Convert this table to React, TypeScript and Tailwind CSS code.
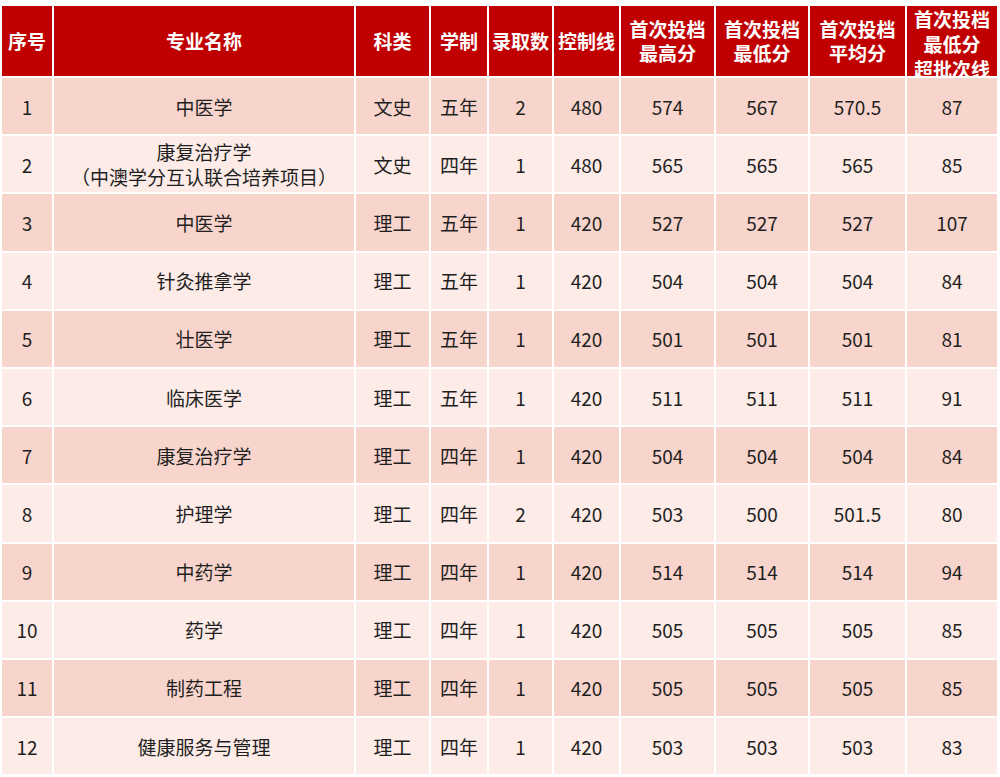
import React from "react";

const headers: string[][] = [
  ["序号"],
  ["专业名称"],
  ["科类"],
  ["学制"],
  ["录取数"],
  ["控制线"],
  ["首次投档", "最高分"],
  ["首次投档", "最低分"],
  ["首次投档", "平均分"],
  ["首次投档", "最低分", "超批次线"],
];

const PAREN = "__paren__";

const rows: (string | string[])[][] = [
  ["1", "中医学", "文史", "五年", "2", "480", "574", "567", "570.5", "87"],
  ["2", ["康复治疗学", PAREN], "文史", "四年", "1", "480", "565", "565", "565", "85"],
  ["3", "中医学", "理工", "五年", "1", "420", "527", "527", "527", "107"],
  ["4", "针灸推拿学", "理工", "五年", "1", "420", "504", "504", "504", "84"],
  ["5", "壮医学", "理工", "五年", "1", "420", "501", "501", "501", "81"],
  ["6", "临床医学", "理工", "五年", "1", "420", "511", "511", "511", "91"],
  ["7", "康复治疗学", "理工", "四年", "1", "420", "504", "504", "504", "84"],
  ["8", "护理学", "理工", "四年", "2", "420", "503", "500", "501.5", "80"],
  ["9", "中药学", "理工", "四年", "1", "420", "514", "514", "514", "94"],
  ["10", "药学", "理工", "四年", "1", "420", "505", "505", "505", "85"],
  ["11", "制药工程", "理工", "四年", "1", "420", "505", "505", "505", "85"],
  ["12", "健康服务与管理", "理工", "四年", "1", "420", "503", "503", "503", "83"],
];

function Line({ text }: { text: string }) {
  if (text === PAREN) {
    return (
      <div className="flex items-center">
        <span className="inline-block w-[19px] text-center">（</span>
        <span>中澳学分互认联合培养项目</span>
        <span className="inline-block w-[19px] text-center">）</span>
      </div>
    );
  }
  return <div>{text}</div>;
}

export default function App() {
  return (
    <div
      className="w-[1000px] h-[777px] bg-white overflow-hidden pl-[2px] pt-[6px]"
      style={{ fontFamily: '"Noto Sans CJK SC", "Noto Sans", sans-serif' }}
    >
      <div className="grid grid-cols-[50px_300px_73px_56px_63px_65px_93px_92px_95px_90px] grid-rows-[70px] auto-rows-[56.2px] gap-[2px]">
        {headers.map((h, i) => (
          <div
            key={"h" + i}
            className={
              "bg-[#c00000] text-white font-bold text-[19px] flex flex-col items-center justify-center overflow-hidden " +
              (h.length === 3 ? "leading-[25px] pt-[4px]" : "leading-[24px]")
            }
          >
            {h.map((line, j) => (
              <div key={j} className="whitespace-nowrap">
                {line}
              </div>
            ))}
          </div>
        ))}
        {rows.map((r, ri) =>
          r.map((c, ci) => (
            <div
              key={ri + "-" + ci}
              className={
                (ri % 2 === 0 ? "bg-[#f8d5cc]" : "bg-[#fcebe7]") +
                " text-[#1f1f1f] text-[19px] leading-[25px] flex flex-col items-center justify-center whitespace-nowrap"
              }
            >
              {Array.isArray(c) ? c.map((l, k) => <Line key={k} text={l} />) : c}
            </div>
          ))
        )}
      </div>
    </div>
  );
}
